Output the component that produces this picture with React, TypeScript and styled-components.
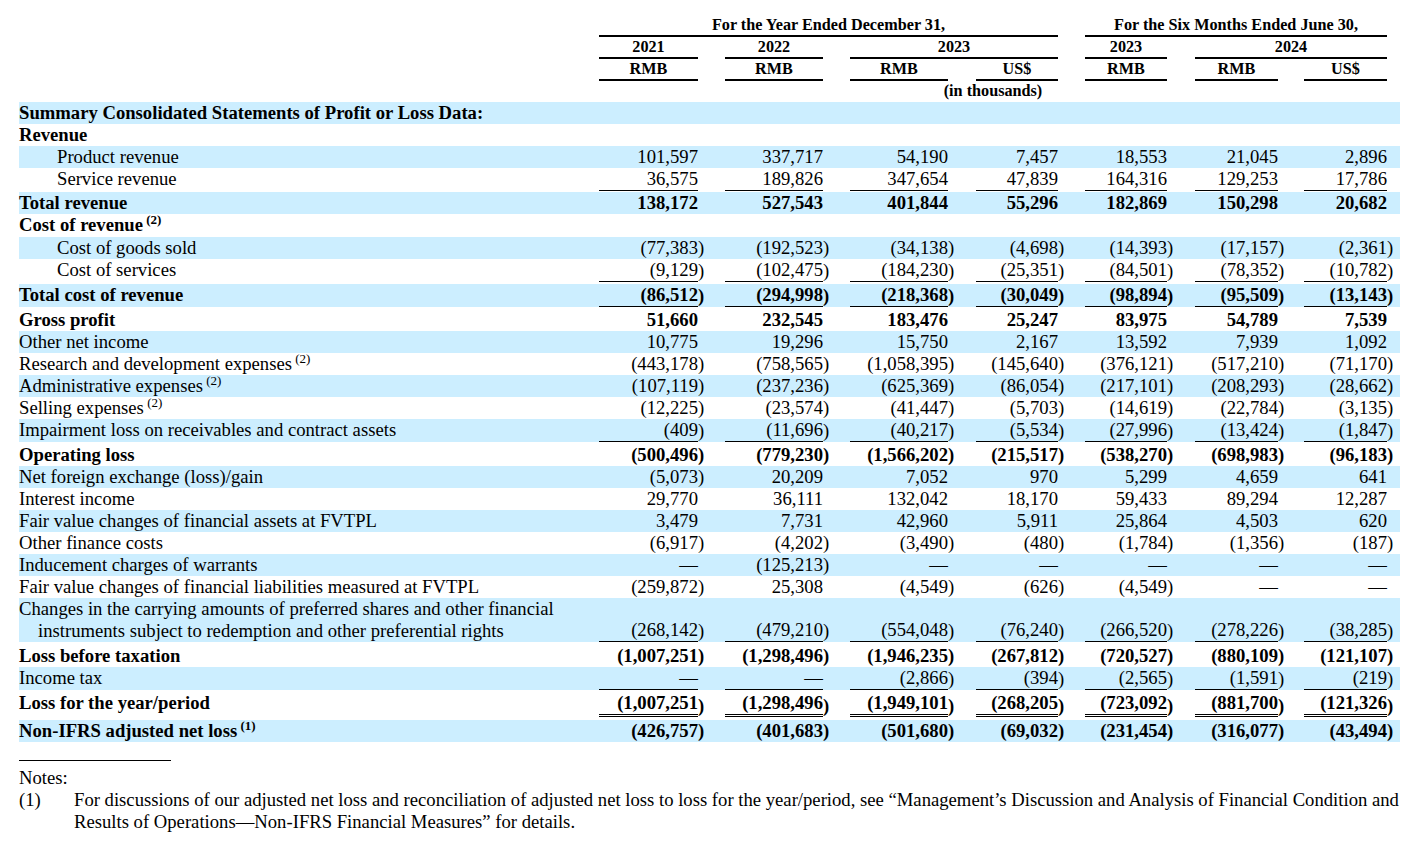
import styled, { createGlobalStyle } from 'styled-components';

const COLS = '580px 99px 27px 98px 27px 98px 28px 82px 27px 82px 28px 83px 26px 83px 13px';
const BAND = '#cceeff';

type Rule = 'single' | 'double';

interface IRow {
    label: string;
    values?: string[];
    bold?: boolean;
    band?: boolean;
    indent?: boolean;
    hanging?: boolean;
    sup?: string;
    rule?: Rule;
    gap?: number;
}

const rows: IRow[] = [
    { label: 'Summary Consolidated Statements of Profit or Loss Data:', bold: true, band: true },
    { label: 'Revenue', bold: true },
    { label: 'Product revenue', indent: true, band: true, values: ['101,597', '337,717', '54,190', '7,457', '18,553', '21,045', '2,896'] },
    { label: 'Service revenue', indent: true, rule: 'single', gap: 1, values: ['36,575', '189,826', '347,654', '47,839', '164,316', '129,253', '17,786'] },
    { label: 'Total revenue', bold: true, band: true, values: ['138,172', '527,543', '401,844', '55,296', '182,869', '150,298', '20,682'] },
    { label: 'Cost of revenue', bold: true, sup: '(2)', gap: 1 },
    { label: 'Cost of goods sold', indent: true, band: true, values: ['(77,383)', '(192,523)', '(34,138)', '(4,698)', '(14,393)', '(17,157)', '(2,361)'] },
    { label: 'Cost of services', indent: true, rule: 'single', gap: 2, values: ['(9,129)', '(102,475)', '(184,230)', '(25,351)', '(84,501)', '(78,352)', '(10,782)'] },
    { label: 'Total cost of revenue', bold: true, band: true, rule: 'single', gap: 2, values: ['(86,512)', '(294,998)', '(218,368)', '(30,049)', '(98,894)', '(95,509)', '(13,143)'] },
    { label: 'Gross profit', bold: true, values: ['51,660', '232,545', '183,476', '25,247', '83,975', '54,789', '7,539'] },
    { label: 'Other net income', band: true, values: ['10,775', '19,296', '15,750', '2,167', '13,592', '7,939', '1,092'] },
    { label: 'Research and development expenses', sup: '(2)', values: ['(443,178)', '(758,565)', '(1,058,395)', '(145,640)', '(376,121)', '(517,210)', '(71,170)'] },
    { label: 'Administrative expenses', sup: '(2)', band: true, values: ['(107,119)', '(237,236)', '(625,369)', '(86,054)', '(217,101)', '(208,293)', '(28,662)'] },
    { label: 'Selling expenses', sup: '(2)', values: ['(12,225)', '(23,574)', '(41,447)', '(5,703)', '(14,619)', '(22,784)', '(3,135)'] },
    { label: 'Impairment loss on receivables and contract assets', band: true, rule: 'single', gap: 2, values: ['(409)', '(11,696)', '(40,217)', '(5,534)', '(27,996)', '(13,424)', '(1,847)'] },
    { label: 'Operating loss', bold: true, values: ['(500,496)', '(779,230)', '(1,566,202)', '(215,517)', '(538,270)', '(698,983)', '(96,183)'] },
    { label: 'Net foreign exchange (loss)/gain', band: true, values: ['(5,073)', '20,209', '7,052', '970', '5,299', '4,659', '641'] },
    { label: 'Interest income', values: ['29,770', '36,111', '132,042', '18,170', '59,433', '89,294', '12,287'] },
    { label: 'Fair value changes of financial assets at FVTPL', band: true, values: ['3,479', '7,731', '42,960', '5,911', '25,864', '4,503', '620'] },
    { label: 'Other finance costs', values: ['(6,917)', '(4,202)', '(3,490)', '(480)', '(1,784)', '(1,356)', '(187)'] },
    { label: 'Inducement charges of warrants', band: true, values: ['—', '(125,213)', '—', '—', '—', '—', '—'] },
    { label: 'Fair value changes of financial liabilities measured at FVTPL', values: ['(259,872)', '25,308', '(4,549)', '(626)', '(4,549)', '—', '—'] },
    {
        label: 'Changes in the carrying amounts of preferred shares and other financial instruments subject to redemption and other preferential rights',
        band: true,
        hanging: true,
        rule: 'single',
        gap: 3,
        values: ['(268,142)', '(479,210)', '(554,048)', '(76,240)', '(266,520)', '(278,226)', '(38,285)']
    },
    { label: 'Loss before taxation', bold: true, values: ['(1,007,251)', '(1,298,496)', '(1,946,235)', '(267,812)', '(720,527)', '(880,109)', '(121,107)'] },
    { label: 'Income tax', band: true, rule: 'single', gap: 2, values: ['—', '—', '(2,866)', '(394)', '(2,565)', '(1,591)', '(219)'] },
    { label: 'Loss for the year/period', bold: true, rule: 'double', gap: 3, values: ['(1,007,251)', '(1,298,496)', '(1,949,101)', '(268,205)', '(723,092)', '(881,700)', '(121,326)'] },
    { label: 'Non-IFRS adjusted net loss', bold: true, band: true, sup: '(1)', values: ['(426,757)', '(401,683)', '(501,680)', '(69,032)', '(231,454)', '(316,077)', '(43,494)'] }
];

const GlobalStyle = createGlobalStyle`
    body {
        margin: 0;
        background: #fff;
        color: #000;
        font-family: 'Liberation Serif', 'Times New Roman', serif;
    }
`;

export default function App() {
    return (
        <Page>
            <GlobalStyle />
            <HeaderGrid>
                <HeadCell $col="2 / 9" $row={1} $rule>For the Year Ended December 31,</HeadCell>
                <HeadCell $col="10 / 15" $row={1} $rule>For the Six Months Ended June 30,</HeadCell>
                <HeadCell $col="2 / 3" $row={2} $rule>2021</HeadCell>
                <HeadCell $col="4 / 5" $row={2} $rule>2022</HeadCell>
                <HeadCell $col="6 / 9" $row={2} $rule>2023</HeadCell>
                <HeadCell $col="10 / 11" $row={2} $rule>2023</HeadCell>
                <HeadCell $col="12 / 15" $row={2} $rule>2024</HeadCell>
                <HeadCell $col="2 / 3" $row={3} $rule>RMB</HeadCell>
                <HeadCell $col="4 / 5" $row={3} $rule>RMB</HeadCell>
                <HeadCell $col="6 / 7" $row={3} $rule>RMB</HeadCell>
                <HeadCell $col="8 / 9" $row={3} $rule>US$</HeadCell>
                <HeadCell $col="10 / 11" $row={3} $rule>RMB</HeadCell>
                <HeadCell $col="12 / 13" $row={3} $rule>RMB</HeadCell>
                <HeadCell $col="14 / 15" $row={3} $rule>US$</HeadCell>
                <HeadCell $col="2 / 15" $row={4}>(in thousands)</HeadCell>
            </HeaderGrid>
            <Body>
                {rows.map((row, i) => (
                    <Row key={i} $band={row.band} $gap={row.gap}>
                        <Label $bold={row.bold} $indent={row.indent} $hanging={row.hanging}>
                            {row.label}
                            {row.sup && <Sup> {row.sup}</Sup>}
                        </Label>
                        {(row.values ?? Array(7).fill('')).map((v, j) => {
                            const neg = v.endsWith(')');
                            return [
                                <Num key={`n${j}`} $bold={row.bold} $rule={row.values ? row.rule : undefined}>
                                    {neg ? v.slice(0, -1) : v}
                                </Num>,
                                <Paren key={`p${j}`} $bold={row.bold}>
                                    {neg ? ')' : ''}
                                </Paren>
                            ];
                        })}
                    </Row>
                ))}
            </Body>
            <Notes>
                <NoteRule />
                <NoteTitle>Notes:</NoteTitle>
                <NoteItem>
                    <span>(1)</span>
                    <span>
                        For discussions of our adjusted net loss and reconciliation of adjusted net loss to loss for the year/period, see
                        “Management’s Discussion and Analysis of Financial Condition and Results of Operations—Non-IFRS Financial Measures” for
                        details.
                    </span>
                </NoteItem>
            </Notes>
        </Page>
    );
}

const Page = styled.div`
    width: 1381px;
    padding: 15px 20px 0 19px;
`;

const HeaderGrid = styled.div`
    display: grid;
    grid-template-columns: ${COLS};
    grid-template-rows: 22px 22px 22px 20px;
`;

const HeadCell = styled.div<{ $col: string; $row: number; $rule?: boolean }>`
    grid-column: ${(p) => p.$col};
    grid-row: ${(p) => p.$row};
    text-align: center;
    font-size: 16.2px;
    font-weight: bold;
    line-height: 21px;
    white-space: nowrap;
    border-bottom: ${(p) => (p.$rule ? '2px solid #000' : 'none')};
`;

const Body = styled.div`
    padding-top: 1px;
`;

const Row = styled.div<{ $band?: boolean; $gap?: number }>`
    display: grid;
    grid-template-columns: ${COLS};
    align-items: end;
    background: ${(p) => (p.$band ? BAND : 'transparent')};
    margin-bottom: ${(p) => p.$gap ?? 0}px;
    font-size: 18.67px;
    line-height: 22px;
`;

const Label = styled.div<{ $bold?: boolean; $indent?: boolean; $hanging?: boolean }>`
    align-self: start;
    white-space: ${(p) => (p.$hanging ? 'normal' : 'nowrap')};
    font-weight: ${(p) => (p.$bold ? 'bold' : 'normal')};
    padding-left: ${(p) => (p.$indent ? 38 : p.$hanging ? 19 : 0)}px;
    text-indent: ${(p) => (p.$hanging ? -19 : 0)}px;
    padding-right: 20px;
`;

const Sup = styled.sup`
    font-size: 13px;
    line-height: 0;
    vertical-align: 7px;
`;

const Num = styled.div<{ $bold?: boolean; $rule?: Rule }>`
    text-align: right;
    white-space: nowrap;
    height: 22px;
    box-sizing: content-box;
    font-weight: ${(p) => (p.$bold ? 'bold' : 'normal')};
    border-bottom: ${(p) => (p.$rule === 'double' ? '3px double #000' : p.$rule === 'single' ? '1px solid #000' : 'none')};
`;

const Paren = styled.div<{ $bold?: boolean }>`
    text-align: left;
    height: 22px;
    font-weight: ${(p) => (p.$bold ? 'bold' : 'normal')};
`;

const Notes = styled.div`
    padding-top: 18px;
    font-size: 18.67px;
    line-height: 22px;
`;

const NoteRule = styled.div`
    width: 152px;
    border-top: 1px solid #000;
    margin-bottom: 6px;
`;

const NoteTitle = styled.div``;

const NoteItem = styled.div`
    display: grid;
    grid-template-columns: 55px 1fr;
`;
